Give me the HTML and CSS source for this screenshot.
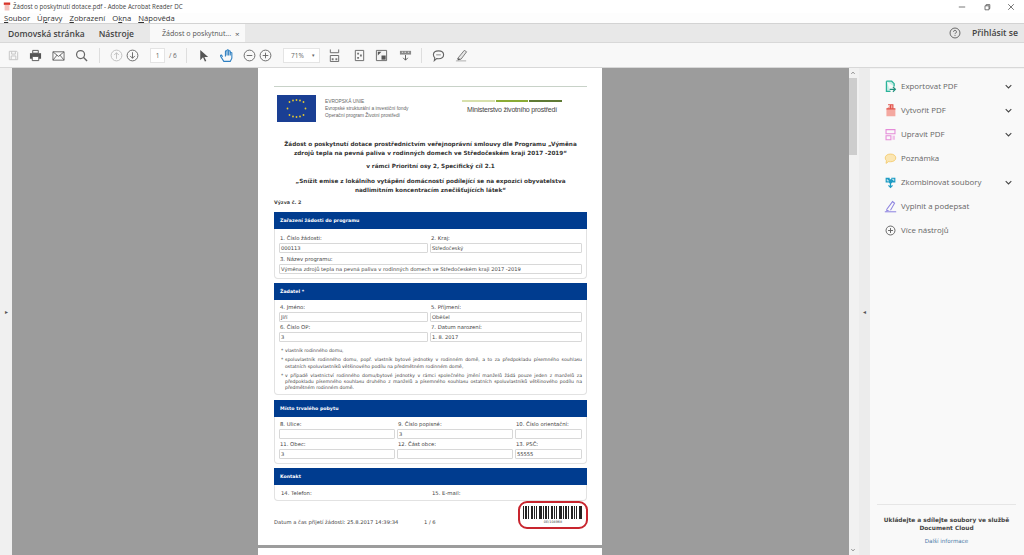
FILE: index.html
```html
<!DOCTYPE html>
<html lang="cs">
<head>
<meta charset="utf-8">
<title>Žádost o poskytnutí dotace.pdf - Adobe Acrobat Reader DC</title>
<link rel="stylesheet" href="styles.css">
</head>
<body>
<div class="app">
  <header class="titlebar">
    <svg class="t-ico" viewBox="0 0 10 10"><path d="M1 0h8v3H1z" fill="#d8352a"/><path d="M2 3h6v7H2z" fill="#f3c3bd"/></svg>
    <span class="t-text">Žádost o poskytnutí dotace.pdf - Adobe Acrobat Reader DC</span>
    <div class="winbtns">
      <svg viewBox="0 0 10 10"><path d="M1 5h8" stroke="#555" fill="none"/></svg>
      <svg viewBox="0 0 10 10"><path d="M2.500 3.500h5v5h-5zM4 3.500V2h4.500v5H7.500" stroke="#555" fill="none"/></svg>
      <svg viewBox="0 0 10 10"><path d="M1.500 1.500l7 7M8.500 1.500l-7 7" stroke="#555" fill="none"/></svg>
    </div>
  </header>
  <nav class="menubar">
    <span><u>S</u>oubor</span><span>Ú<u>p</u>ravy</span><span><u>Z</u>obrazení</span><span>O<u>k</u>na</span><span><u>N</u>ápověda</span>
  </nav>
  <div class="tabbar">
    <span class="tab-link">Domovská stránka</span>
    <span class="tab-link second">Nástroje</span>
    <div class="doc-tab"><span>Žádost o poskytnut...</span><b>×</b></div>
    <div class="signin">
      <svg class="help" viewBox="0 0 14 14"><circle cx="7" cy="7" r="5.800" fill="none" stroke="#555"/><path d="M5.300 5.600a1.700 1.700 0 1 1 2.500 1.500c-.6.3-.8.6-.8 1.200M7 9.500v1" fill="none" stroke="#555"/></svg>
      <span>Přihlásit se</span>
    </div>
  </div>
  <div class="toolbar">
    <svg class="i i-save" viewBox="0 0 14 14"><path d="M2.500 2.500h8l1 1v8h-9zM5 2.500v3h4v-3M4.500 11.500v-4h5v4" fill="none" stroke="#c4c4c4"/></svg>
    <svg class="i i-print" viewBox="0 0 14 14"><path d="M4 1.500h6v3H4z" fill="none" stroke="#555"/><path d="M1 4.500h12v6H1z" fill="#555"/><path d="M3.500 8h7v4.500h-7z" fill="#fff" stroke="#555"/></svg>
    <svg class="i i-mail" viewBox="0 0 14 14"><path d="M1 3h12v9H1zM1 3l6 5 6-5M1 12l4.500-5.500M13 12L8.500 6.500" fill="none" stroke="#666"/></svg>
    <svg class="i i-find" viewBox="0 0 14 14"><circle cx="6" cy="6" r="4.300" fill="none" stroke="#666" stroke-width="1.300"/><path d="M9 9l4 4" stroke="#666" stroke-width="1.500"/></svg>
    <i class="sep s1"></i>
    <svg class="i i-up" viewBox="0 0 14 14"><circle cx="7" cy="7" r="5.800" fill="none" stroke="#bdbdbd"/><path d="M7 10.500V4M4.500 6.500L7 4l2.500 2.500" fill="none" stroke="#bdbdbd"/></svg>
    <svg class="i i-down" viewBox="0 0 14 14"><circle cx="7" cy="7" r="5.800" fill="none" stroke="#666"/><path d="M7 3.500V10M4.500 7.500L7 10l2.500-2.500" fill="none" stroke="#666"/></svg>
    <span class="pagebox">1</span><span class="pagetotal">/ 6</span>
    <i class="sep s2"></i>
    <svg class="i i-arrow" viewBox="0 0 14 14"><path d="M3.500 1v11l3-3 2 4.500 1.500-.7-2-4.300h4z" fill="#555"/></svg>
    <svg class="i i-hand" viewBox="0 0 14 14"><path d="M3.500 8L2 6.500c-.8.300-.8 1 0 2l2.500 4h6l1.500-3V4.500c-.8-.7-1.500 0-1.500.5V7V3c-.8-.8-1.500-.3-1.500.3V7V2c-.8-.7-1.500-.5-1.500.3V7V3c-.8-.7-1.500-.3-1.500.3V8" fill="none" stroke="#2d7fc1"/></svg>
    <svg class="i i-minus" viewBox="0 0 14 14"><circle cx="7" cy="7" r="5.800" fill="none" stroke="#666"/><path d="M4 7h6" stroke="#666"/></svg>
    <svg class="i i-plus" viewBox="0 0 14 14"><circle cx="7" cy="7" r="5.800" fill="none" stroke="#666"/><path d="M4 7h6M7 4v6" stroke="#666"/></svg>
    <span class="zoombox">71%<em>▾</em></span>
    <svg class="i i-fit1" viewBox="0 0 14 14"><path d="M2.500 .5v3.500h9V.5M2.500 13.500V7h9v6.500h-9" fill="none" stroke="#666"/><path d="M4 10h2v2H4zM8 10h2v2H8z" fill="#777"/></svg>
    <svg class="i i-fit2" viewBox="0 0 14 14"><path d="M2.500 1.500h9v11h-9z" fill="none" stroke="#666"/><path d="M4.500 4h2v2h-2zM7.500 6h2v2h-2zM4.500 8.500h2v2h-2z" fill="#777"/></svg>
    <svg class="i i-fit3" viewBox="0 0 14 14"><path d="M1.500 1.500h11v11h-11z" fill="#f4f4f4" stroke="#666"/><path d="M7 7h4.500v4.500H7z" fill="#555"/><path d="M3 3h4L3 7z" fill="#555"/></svg>
    <svg class="i i-fit4" viewBox="0 0 14 14"><path d="M1 2h12v4H1z" fill="#888"/><path d="M3 3.500h1.500M6 3.500h1.500M9.500 3.500H11" stroke="#eee"/><path d="M7 6.500V12M4.500 9.500L7 12l2.500-2.500" fill="none" stroke="#555"/></svg>
    <i class="sep s3"></i>
    <svg class="i i-note" viewBox="0 0 14 14"><path d="M7 2c3.300 0 5.500 1.800 5.500 4.300S10.300 10.500 7 10.500c-.7 0-1.300 0-2-.2L2.500 12.500l.5-3C2 8.600 1.500 7.500 1.500 6.300 1.500 3.800 3.700 2 7 2z" fill="none" stroke="#666" stroke-width="1.200"/><path d="M4.500 6.300h5" stroke="#888"/></svg>
    <svg class="i i-sign" viewBox="0 0 14 14"><path d="M3 10L10 1.500l2.500 1.500-6 8H3z" fill="#e6e6e6" stroke="#777"/><path d="M1 12.800h11" stroke="#aaa"/><path d="M3 10l3 1-3 1.500z" fill="#555"/></svg>
  </div>
  <div class="workspace">
    <div class="leftstrip"><span class="grip">▸</span></div>
    <main class="viewer">
      <article class="page">
        <div class="rule"></div>
        <div class="logos">
          <svg class="eu" viewBox="0 0 39 27"><rect width="39" height="27" fill="#1a3f94"/><g fill="#e6c92e"><circle cx="19.500" cy="5" r=".9"/><circle cx="26.500" cy="7" r=".9"/><circle cx="28.500" cy="13.500" r=".9"/><circle cx="26.500" cy="20" r=".9"/><circle cx="19.500" cy="22" r=".9"/><circle cx="12.500" cy="20" r=".9"/><circle cx="10.500" cy="13.500" r=".9"/><circle cx="12.500" cy="7" r=".9"/><circle cx="23" cy="5.500" r=".9"/><circle cx="16" cy="5.500" r=".9"/><circle cx="23" cy="21.500" r=".9"/><circle cx="16" cy="21.500" r=".9"/></g></svg>
          <div class="eu-text"><div>EVROPSKÁ UNIE</div><div>Evropské strukturální a investiční fondy</div><div>Operační program Životní prostředí</div></div>
          <div class="mzp"><div class="mzp-bars"><i></i><i></i><i></i></div><div class="mzp-name">Ministerstvo životního prostředí</div></div>
        </div>
        <h1 class="head h1a">Žádost o poskytnutí dotace prostřednictvím veřejnoprávní smlouvy dle Programu „Výměna<br>zdrojů tepla na pevná paliva v rodinných domech ve Středočeském kraji 2017 -2019“</h1>
        <h2 class="head h2a">v rámci Prioritní osy 2, Specifický cíl 2.1</h2>
        <h2 class="head h2b">„Snížit emise z lokálního vytápění domácností podílející se na expozici obyvatelstva<br>nadlimitním koncentracím znečišťujících látek“</h2>
        <div class="vyzva">Výzva č. 2</div>

        <section class="card c1">
          <div class="card-h">Zařazení žádosti do programu</div>
          <div class="card-b two">
            <div class="f"><label>1. Číslo žádosti:</label><div class="in">000113</div></div>
            <div class="f"><label>2. Kraj:</label><div class="in">Středočeský</div></div>
            <div class="f span"><label>3. Název programu:</label><div class="in">Výměna zdrojů tepla na pevná paliva v rodinných domech ve Středočeském kraji 2017 -2019</div></div>
          </div>
        </section>

        <section class="card c2">
          <div class="card-h">Žadatel *</div>
          <div class="card-b two">
            <div class="f"><label>4. Jméno:</label><div class="in">Jiří</div></div>
            <div class="f"><label>5. Příjmení:</label><div class="in">Oběšel</div></div>
            <div class="f"><label>6. Číslo OP:</label><div class="in">3</div></div>
            <div class="f"><label>7. Datum narození:</label><div class="in">1. 8. 2017</div></div>
            <ul class="notes span">
              <li>vlastník rodinného domu,</li>
              <li>spoluvlastník rodinného domu, popř. vlastník bytové jednotky v rodinném domě, a to za předpokladu písemného souhlasu ostatních spoluvlastníků většinového podílu na předmětném rodinném domě,</li>
              <li>v případě vlastnictví rodinného domu/bytové jednotky v rámci společného jmění manželů žádá pouze jeden z manželů za předpokladu písemného souhlasu druhého z manželů a písemného souhlasu ostatních spoluvlastníků většinového podílu na předmětném rodinném domě.</li>
            </ul>
          </div>
        </section>

        <section class="card c3">
          <div class="card-h">Místo trvalého pobytu</div>
          <div class="card-b three">
            <div class="f"><label>8. Ulice:</label><div class="in"></div></div>
            <div class="f"><label>9. Číslo popisné:</label><div class="in">3</div></div>
            <div class="f"><label>10. Číslo orientační:</label><div class="in"></div></div>
            <div class="f"><label>11. Obec:</label><div class="in">3</div></div>
            <div class="f"><label>12. Část obce:</label><div class="in"></div></div>
            <div class="f"><label>13. PSČ:</label><div class="in">55555</div></div>
          </div>
        </section>

        <section class="card c4">
          <div class="card-h">Kontakt</div>
          <div class="card-b two plain">
            <div class="f"><label>14. Telefon:</label></div>
            <div class="f"><label>15. E-mail:</label></div>
          </div>
        </section>

        <div class="pagefoot">
          <span class="stamp">Datum a čas přijetí žádosti: 25.8.2017 14:39:34</span>
          <span class="pg">1 / 6</span>
          <div class="barcode"><div class="bars"></div><div class="code">0E/104968</div></div>
        </div>
      </article>
      <div class="page next"></div>
    </main>
    <div class="scrollbar">
      <svg class="sb-up" viewBox="0 0 10 10"><path d="M3 6l2-2 2 2" fill="none" stroke="#666"/></svg>
      <div class="sb-thumb"></div>
      <svg class="sb-down" viewBox="0 0 10 10"><path d="M3 4l2 2 2-2" fill="none" stroke="#666"/></svg>
    </div>
    <div class="rightstrip"><span class="grip">◂</span></div>
    <aside class="panel">
      <ul class="tools">
        <li><svg viewBox="0 0 16 16"><path d="M3 1.500h6.500L12.500 4.500v3.500M3 1.500V14h5" fill="#c9eee6" stroke="#2bb39a" stroke-width="1.600"/><path d="M7 11.500h7M11 8.500l3 3-3 3" fill="none" stroke="#1f8f7c" stroke-width="1.500"/></svg><span>Exportovat PDF</span><svg class="chev" viewBox="0 0 10 6"><path d="M1 1l4 4 4-4" fill="none" stroke="#444" stroke-width="1.500"/></svg></li>
        <li><svg viewBox="0 0 16 16"><path d="M3 6l5-5h3v5h3v9H3z" fill="#f4a8a0"/><path d="M3 6h11M8 1v5M5 1h6v5" fill="none" stroke="#e0524a" stroke-width="1.300"/></svg><span>Vytvořit PDF</span><svg class="chev" viewBox="0 0 10 6"><path d="M1 1l4 4 4-4" fill="none" stroke="#444" stroke-width="1.500"/></svg></li>
        <li><svg viewBox="0 0 16 16"><path d="M2.500 2h11v5h-11zM2.500 9.500h6v5h-6z" fill="none" stroke="#e58ad8" stroke-width="1.300"/><path d="M10.500 9.500h3v5h-3z" fill="#f0bfe9"/></svg><span>Upravit PDF</span><svg class="chev" viewBox="0 0 10 6"><path d="M1 1l4 4 4-4" fill="none" stroke="#444" stroke-width="1.500"/></svg></li>
        <li><svg viewBox="0 0 16 16"><path d="M8 2.500c3.800 0 6.500 2 6.500 4.800s-2.700 4.700-6.500 4.700c-.8 0-1.500 0-2.200-.3L2.500 14l.5-3.300C2 9.700 1.500 8.600 1.500 7.300 1.500 4.500 4.200 2.500 8 2.500z" fill="#fbe6b3" stroke="#f3c766"/></svg><span>Poznámka</span></li>
        <li><svg viewBox="0 0 16 16"><path d="M2 2h5v2h2V2h5v6h-4l-2 2-2-2H2z" fill="#1e9cc4"/><path d="M8 6v8M5.500 11.500L8 14l2.500-2.500" fill="none" stroke="#1e9cc4" stroke-width="1.500"/><path d="M4 4v2h2M10 4h2v2" fill="none" stroke="#fff"/></svg><span>Zkombinovat soubory</span><svg class="chev" viewBox="0 0 10 6"><path d="M1 1l4 4 4-4" fill="none" stroke="#444" stroke-width="1.500"/></svg></li>
        <li><svg viewBox="0 0 16 16"><path d="M3 12L10.500 2l2.500 2-5 8.500" fill="none" stroke="#8f85e0" stroke-width="1.300"/><path d="M1 14.500h14" stroke="#8f85e0" stroke-width="1.300"/><path d="M3 12l4 .5-4.500 1.500z" fill="#8f85e0"/></svg><span>Vyplnit a podepsat</span></li>
        <li><svg viewBox="0 0 16 16"><circle cx="8" cy="8" r="5.500" fill="none" stroke="#666" stroke-width="1.200"/><path d="M5 8h6M8 5v6" stroke="#666" stroke-width="1.200"/></svg><span>Více nástrojů</span></li>
      </ul>
      <div class="cloud">
        <strong>Ukládejte a sdílejte soubory ve službě<br>Document Cloud</strong>
        <a>Další informace</a>
      </div>
    </aside>
  </div>
</div>
</body>
</html>
```
FILE: styles.css
```css
* { box-sizing: border-box; }
html, body { margin: 0; padding: 0; height: 100%; overflow: hidden; }
body { font-family: "Open Sans", "Liberation Sans", sans-serif; color: #333; background: #fff; }
.app { width: 1024px; height: 555px; display: flex; flex-direction: column; overflow: hidden; }

.titlebar { height: 13px; display: flex; align-items: center; padding-left: 3px; background: #fff; color: #444; flex: none; }
.t-ico { width: 8px; height: 9px; }
.t-text { margin-left: 2px; font-size: 6.200px; }
.winbtns { margin-left: auto; display: flex; gap: 16.500px; padding-right: 9px; }
.winbtns svg { width: 8px; height: 8px; }

.menubar { height: 10px; display: flex; gap: 7px; padding-left: 4px; font-size: 7.700px; line-height: 10px; color: #333; flex: none; background: #fdfdfd; }

.tabbar { height: 20px; background: #e8e8e8; border-top: 1px solid #d3d3d3; border-bottom: 1px solid #d8d8d8; display: flex; align-items: center; flex: none; }
.tab-link { font-weight: 600; color: #444; margin-left: 8px; font-size: 8.500px; }
.tab-link.second { margin-left: 14px; }
.doc-tab { margin-left: 16px; width: 95px; height: 18px; background: #f9f9f9; display: flex; align-items: center; padding-left: 12px; gap: 4px; font-size: 7.100px; color: #555; }
.doc-tab b { font-weight: 400; font-size: 8px; }
.signin { margin-left: auto; display: flex; align-items: center; gap: 11px; padding-right: 6px; font-weight: 600; color: #444; font-size: 8.700px; }
.help { width: 12px; height: 12px; }

.toolbar { height: 25px; background: #f8f8f8; border-bottom: 1px solid #d8d8d8; display: flex; align-items: center; padding-left: 7px; flex: none; font-size: 6.500px; color: #666; }
.i { width: 13px; height: 13px; flex: none; }
.i-print { margin-left: 9px; }
.i-mail { margin-left: 10px; }
.i-find { margin-left: 10px; }
.sep { width: 1px; height: 15px; background: #dedede; flex: none; }
.s1 { margin-left: 11px; }
.i-up { margin-left: 10px; }
.i-down { margin-left: 3px; }
.pagebox { margin-left: 11px; width: 15px; height: 15px; background: #fff; border: 1px solid #e4e4e4; text-align: center; line-height: 13px; }
.pagetotal { margin-left: 4px; width: 13px; }
.s2 { margin-left: 4px; }
.i-arrow { margin-left: 10px; }
.i-hand { margin-left: 9px; width: 15px; height: 15px; }
.i-minus { margin-left: 9px; }
.i-plus { margin-left: 3px; }
.zoombox { margin-left: 11px; width: 37px; height: 15px; background: #fff; border: 1px solid #e4e4e4; line-height: 13px; padding: 0 4px 0 7px; display: flex; justify-content: space-between; }
.zoombox em { font-style: normal; font-size: 5px; }
.i-fit1 { margin-left: 8px; }
.i-fit2 { margin-left: 12px; }
.i-fit3 { margin-left: 9px; }
.i-fit4 { margin-left: 11px; }
.s3 { margin-left: 9px; }
.i-note { margin-left: 10px; }
.i-sign { margin-left: 10px; }

.workspace { flex: 1; display: flex; min-height: 0; }
.leftstrip { width: 12px; background: #f0f0f0; display: flex; align-items: center; justify-content: center; flex: none; }
.rightstrip { width: 11px; background: #ececec; display: flex; align-items: center; justify-content: center; flex: none; }
.grip { font-size: 6px; color: #555; }
.viewer { width: 837px; flex: none; background: #9c9c9c; display: flex; flex-direction: column; align-items: center; gap: 3px; padding-right: 1px; overflow: hidden; }
.page { width: 344px; height: 477px; background: #fff; flex: none; padding: 18px 15px 0 16px; }
.page.next { height: 20px; padding: 0; }
.rule { height: 1px; background: #c8d2c8; }
.logos { display: flex; height: 27px; margin: 8px 0 0 3px; }
.eu { width: 39px; height: 27px; flex: none; }
.eu-text { margin-left: 9px; width: 88px; font-family: "Liberation Sans", sans-serif; font-size: 4.800px; line-height: 7px; color: #666; padding-top: 2.500px; white-space: nowrap; flex: none; }
.mzp { margin-left: 49px; width: 100px; flex: none; }
.mzp-bars { display: flex; gap: 1px; height: 2px; margin-top: 5px; }
.mzp-bars i { flex: 1; }
.mzp-bars i:nth-child(1) { background: #d7e0ac; }
.mzp-bars i:nth-child(2) { background: #8aab35; }
.mzp-bars i:nth-child(3) { background: #5f7a35; }
.mzp-name { font-family: "Liberation Sans", sans-serif; font-size: 7px; line-height: 8px; letter-spacing: -.22px; margin-top: 4px; text-align: center; color: #444; white-space: nowrap; }
.head { margin: 0; text-align: center; font-family: "DejaVu Sans", sans-serif; font-weight: 700; font-size: 5.700px; line-height: 9.300px; color: #333; white-space: nowrap; }
.h1a { margin-top: 17.500px; }
.h2a { margin-top: 4px; }
.h2b { margin-top: 5.700px; }
.vyzva { font-family: "DejaVu Sans", sans-serif; font-size: 4.800px; font-weight: 700; margin-top: 3px; line-height: 8px; color: #444; }

.card { font-family: "DejaVu Sans", sans-serif; font-size: 5.300px; color: #444; }
.c1 { margin-top: 5.300px; }
.c2 { margin-top: 4px; }
.c3 { margin-top: 5px; }
.c4 { margin-top: 4px; }
.card-h { background: #003c8f; color: #fff; font-weight: 700; height: 17px; line-height: 17px; padding-left: 6px; font-size: 4.700px; }
.card-b { border: 1px solid #e2e2e2; border-top: 0; border-radius: 0 0 4px 4px; padding: 3px 4px 2px; display: grid; row-gap: 1px; column-gap: 2px; }
.two { grid-template-columns: 149px 152px; }
.three { grid-template-columns: 116px 116px 67px; padding-bottom: 4px; }
.c1 .card-b { padding-top: 5px; padding-bottom: 4px; row-gap: 2px; }
.span { grid-column: 1 / -1; }
.f label { display: block; height: 8px; line-height: 8px; padding-left: 1px; white-space: nowrap; }
.in { height: 10px; border: 1px solid #d8d8d8; border-radius: 1px; line-height: 9px; padding-left: 1px; font-size: 5.150px; margin-top: 1px; color: #444; white-space: nowrap; overflow: hidden; }
.plain { padding: 4px 4px 0; height: 16px; }
.plain .f label { padding-left: 2px; }
.notes { margin: 5px 0 0; padding: 0 0 0 6px; list-style: none; font-size: 4.600px; line-height: 6.300px; text-align: justify; }
.notes li { margin-bottom: 3px; position: relative; }
.notes li:last-child { margin-bottom: 0; }
.notes li::before { content: "*"; position: absolute; left: -4px; top: 0; }

.pagefoot { display: flex; align-items: center; height: 28px; font-family: "DejaVu Sans", sans-serif; font-size: 5.200px; color: #444; }
.stamp { margin-top: 15px; white-space: nowrap; width: 124px; flex: none; }
.pg { margin-left: 26px; margin-top: 15px; }
.barcode { margin-left: auto; margin-right: -1px; width: 70px; height: 28px; border: 2px solid #c8252e; border-radius: 9px; padding: 3px 3px 0; text-align: center; }
.bars { height: 13px; background: repeating-linear-gradient(90deg, #222 0 1px, #fff 1px 2px, #222 2px 4px, #fff 4px 5px, #222 5px 6px, #fff 6px 8px, #222 8px 10px, #fff 10px 11px, #222 11px 12px, #fff 12px 13px, #222 13px 14px, #fff 14px 16px, #222 16px 19px, #fff 19px 20px); }
.code { font-size: 3.400px; line-height: 6px; }

.scrollbar { width: 10px; background: #f1f1f1; flex: none; display: flex; flex-direction: column; padding-right: 2px; }
.sb-up { width: 8px; height: 10px; flex: none; }
.sb-thumb { width: 8px; height: 77px; background: #cdcdcd; flex: none; }
.sb-down { width: 8px; height: 10px; flex: none; margin-top: auto; }
.panel { flex: 1; background: #f9f9f9; border-top: 1px solid #f1f1f1; padding: 5px 0 0 14px; display: flex; flex-direction: column; min-width: 0; }
.tools { list-style: none; margin: 0; padding: 0; }
.tools li { height: 24px; display: flex; align-items: center; font-size: 7.900px; color: #666; }
.tools li > svg:first-child { width: 13px; height: 13px; flex: none; margin-right: 4px; }
.tools li span { flex: 1; white-space: nowrap; }
.chev { width: 7px; height: 5px; flex: none; margin-right: 12px; }
.cloud { margin-top: auto; margin-left: -7px; margin-right: 8px; border-top: 1px solid #e6e6e6; text-align: center; padding: 11px 0 9.600px; font-family: "DejaVu Sans", sans-serif; font-size: 5.850px; line-height: 8px; color: #444; }
.cloud strong { display: block; white-space: nowrap; }
.cloud a { display: block; margin-top: 5.400px; color: #4a79a8; font-weight: 400; font-size: 5.600px; }
```
